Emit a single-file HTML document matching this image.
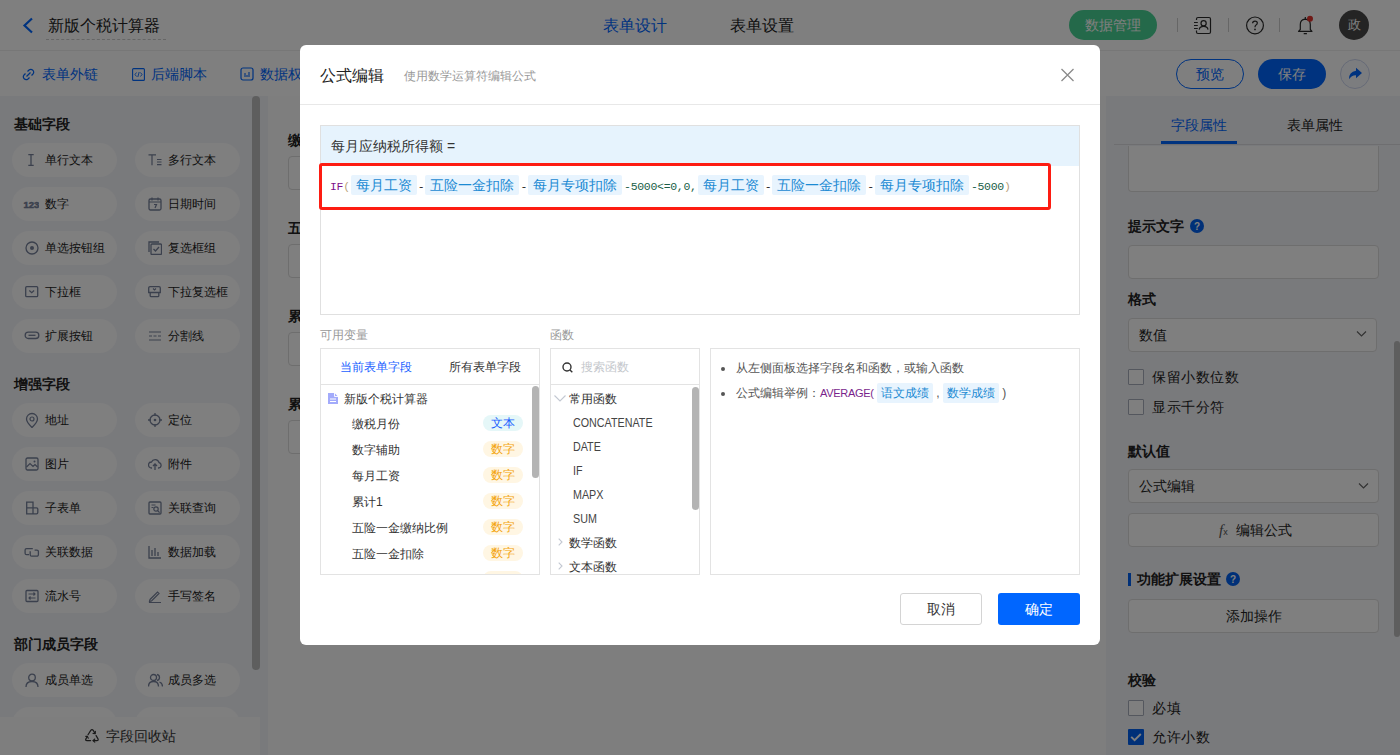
<!DOCTYPE html>
<html><head><meta charset="utf-8">
<style>
*{box-sizing:border-box;margin:0;padding:0}
html,body{width:1400px;height:755px;overflow:hidden;background:#fff;font-family:"Liberation Sans",sans-serif;color:#333}
.abs{position:absolute}
svg{display:block}
/* header */
#hdr{position:absolute;left:0;top:0;width:1400px;height:50px;background:#fff}
#sub{position:absolute;left:0;top:50px;width:1400px;height:46px;background:#fff}
#side{position:absolute;left:0;top:96px;width:268px;height:659px;background:#f3f4f8}
#canvas{position:absolute;left:268px;top:96px;width:838px;height:659px;background:#fdfdfd}
#right{position:absolute;left:1106px;top:96px;width:294px;height:659px;background:#f3f4f8}
.sec{position:absolute;left:14px;font-size:14px;font-weight:bold;color:#222;line-height:14px}
.chip{position:absolute;width:105px;height:34px;border-radius:17px;background:#fefeff;font-size:12px;color:#222;line-height:34px;padding-left:33px}
.chip svg{position:absolute;left:13px;top:10px}
.lbl{position:absolute;font-size:14px;color:#222;line-height:14px}
.inp{position:absolute;background:#fff;border:1px solid #dcdcdc;border-radius:4px}
.mask{position:absolute;left:0;top:0;width:1400px;height:755px;background:rgba(0,0,0,.5)}
#modal{position:absolute;left:300px;top:45px;width:800px;height:600px;background:#fff;border-radius:6px}
.tag{display:inline-block;background:#e8f4fe;color:#1b8ad3;font-size:14px;height:20px;line-height:20px;padding:0 5px;border-radius:2px;vertical-align:middle}
.mono{font-family:"Liberation Mono",monospace;font-size:11.5px;letter-spacing:-0.3px;vertical-align:middle;position:relative;top:2px}
.badge{position:absolute;left:162px;width:40px;height:16px;border-radius:8px;font-size:12px;line-height:16px;text-align:center}
.bt{background:#fff6e3;color:#f3a30a}
.vi{position:absolute;left:31px;font-size:12px;color:#333;line-height:12px}
.fn{position:absolute;left:22px;font-size:12px;color:#444;line-height:12px;transform:scaleX(.895);transform-origin:0 0}
</style></head><body>
<!-- HEADER -->
<div id="hdr">
  <svg class="abs" style="left:22px;top:17px" width="12" height="17" viewBox="0 0 12 17"><path d="M10 1.5 L2.5 8.5 L10 15.5" fill="none" stroke="#0066ff" stroke-width="2.2"/></svg>
  <div class="abs" style="left:48px;top:17px;font-size:16px;line-height:18px;color:#222">新版个税计算器</div>
  <div class="abs" style="left:46px;top:39px;width:120px;border-top:1px dashed #ccc"></div>
  <div class="abs" style="left:603px;top:17px;font-size:16px;line-height:18px;color:#0066ff">表单设计</div>
  <div class="abs" style="left:730px;top:17px;font-size:16px;line-height:18px;color:#222">表单设置</div>
  <div class="abs" style="left:1069px;top:10px;width:88px;height:30px;border-radius:15px;background:#48d294;color:#fff;font-size:14px;line-height:30px;text-align:center">数据管理</div>
  <div class="abs" style="left:1177px;top:18px;width:1px;height:14px;background:#ccc"></div>
  <div class="abs" style="left:1228px;top:18px;width:1px;height:14px;background:#ccc"></div>
  <div class="abs" style="left:1279px;top:18px;width:1px;height:14px;background:#ccc"></div>
  <svg class="abs" style="left:1193px;top:16px" width="19" height="19" viewBox="0 0 19 19"><path d="M3.5 4V3A1.5 1.5 0 0 1 5 1.5H16A1.5 1.5 0 0 1 17.5 3V16A1.5 1.5 0 0 1 16 17.5H5A1.5 1.5 0 0 1 3.5 16V14.5" fill="none" stroke="#2a2a2a" stroke-width="1.2"/><circle cx="10.6" cy="7.3" r="2.6" fill="none" stroke="#2a2a2a" stroke-width="1.2"/><path d="M6.2 13.6 Q6.6 10.4 10.6 10.4 Q14.6 10.4 15 13.6" fill="none" stroke="#2a2a2a" stroke-width="1.2"/><path d="M1 6.5h3.8M1 9.5h3.8M1 12.5h3.8" stroke="#2a2a2a" stroke-width="1.1"/></svg>
  <svg class="abs" style="left:1245px;top:16px" width="20" height="19" viewBox="0 0 20 19"><circle cx="10" cy="9.4" r="8.4" fill="none" stroke="#2a2a2a" stroke-width="1.2"/><path d="M7.6 7.3 Q7.6 5 10 5 Q12.3 5 12.3 7.1 Q12.3 8.5 10.8 9.2 Q10 9.7 10 11.3" fill="none" stroke="#2a2a2a" stroke-width="1.25"/><circle cx="10" cy="13.4" r="0.85" fill="#2a2a2a"/></svg>
  <svg class="abs" style="left:1296px;top:15px" width="20" height="20" viewBox="0 0 20 20"><path d="M2.5 16.3 L4.3 14.5 V9.5 Q4.3 4.6 9.3 4.2 Q14.3 4.6 14.3 9.5 V14.5 L16 16.3 Z" fill="none" stroke="#2a2a2a" stroke-width="1.2" stroke-linejoin="round"/><path d="M9.3 2v2M7.7 18.6h3.2" stroke="#2a2a2a" stroke-width="1.2"/><circle cx="14" cy="3.8" r="3" fill="#e0322c"/></svg>
  <div class="abs" style="left:1339px;top:10px;width:30px;height:30px;border-radius:15px;background:#484848;color:#fff;font-size:13px;line-height:30px;text-align:center">政</div>
</div>
<!-- SUB TOOLBAR -->
<div id="sub">
  <div class="abs" style="left:0;top:0;width:1400px;height:1px;background:#eee"></div>
  <svg class="abs" style="left:22px;top:18px" width="13" height="13" viewBox="0 0 13 13"><path d="M5.5 3.5 L7 2 Q9 0.5 10.8 2.2 Q12.5 4 11 6 L9.5 7.5 M7.5 9.5 L6 11 Q4 12.5 2.2 10.8 Q0.5 9 2 7 L3.5 5.5 M4.5 8.5 L8.5 4.5" fill="none" stroke="#0066ff" stroke-width="1.2"/></svg>
  <div class="abs" style="left:42px;top:16px;font-size:14px;line-height:16px;color:#0066ff">表单外链</div>
  <svg class="abs" style="left:132px;top:18px" width="13" height="13" viewBox="0 0 13 13"><rect x="0.6" y="0.6" width="11.8" height="11.8" rx="1" fill="none" stroke="#0066ff" stroke-width="1.1"/><path d="M4.5 4.5 L3 6.5 L4.5 8.5 M8.5 4.5 L10 6.5 L8.5 8.5 M7.2 4 L5.8 9" fill="none" stroke="#0066ff" stroke-width="0.9"/></svg>
  <div class="abs" style="left:151px;top:16px;font-size:14px;line-height:16px;color:#0066ff">后端脚本</div>
  <svg class="abs" style="left:240px;top:17px" width="14" height="14" viewBox="0 0 14 14"><rect x="1" y="1" width="12" height="12" rx="2" fill="none" stroke="#0066ff" stroke-width="1.2"/><path d="M5 6v4M7 8v2M9 5v5" stroke="#0066ff" stroke-width="1.1"/></svg>
  <div class="abs" style="left:260px;top:16px;font-size:14px;line-height:16px;color:#0066ff">数据权限</div>
  <div class="abs" style="left:1176px;top:9px;width:68px;height:30px;border-radius:15px;border:1px solid #0066ff;color:#0066ff;font-size:14px;line-height:28px;text-align:center">预览</div>
  <div class="abs" style="left:1258px;top:9px;width:68px;height:30px;border-radius:15px;background:#0066ff;color:#fff;font-size:14px;line-height:30px;text-align:center">保存</div>
  <div class="abs" style="left:1340px;top:9px;width:30px;height:30px;border-radius:15px;background:#f9faff;border:1px solid #cdd6ee"></div>
  <svg class="abs" style="left:1347px;top:17px" width="16" height="14" viewBox="0 0 16 14"><path d="M9 0.8 L15 6 L9 11.2 V8.3 Q4.8 8.1 2 12.3 Q1.8 4.8 9 3.8 Z" fill="#0066ff"/></svg>
</div>
<!-- SIDEBAR -->
<div id="side">
  <div class="sec" style="top:21px">基础字段</div>
  <div class="chip" style="left:12px;top:47px">单行文本<svg width="14" height="14" viewBox="0 0 14 14"><path d="M3.3 1.7h5.4M3.3 12.3h5.4M6 1.7v10.6" stroke="#76819a" stroke-width="1.3" fill="none"/></svg></div>
  <div class="chip" style="left:135px;top:47px">多行文本<svg width="14" height="14" viewBox="0 0 14 14"><path d="M0.5 1.8h7.5M4 1.8v10.5M9 6.5h4.5M9 9h4.5M9 11.7h4.5" stroke="#76819a" stroke-width="1.2" fill="none"/></svg></div>
  <div class="chip" style="left:12px;top:91px">数字<svg width="16" height="14" viewBox="0 0 16 14" style="left:11px"><text x="0.5" y="10.5" font-size="9.5" font-weight="bold" fill="#76819a" stroke="#76819a" stroke-width="0.5" font-family="Liberation Sans">123</text></svg></div>
  <div class="chip" style="left:135px;top:91px">日期时间<svg width="14" height="14" viewBox="0 0 14 14"><rect x="1" y="2" width="12" height="11" rx="1.5" fill="none" stroke="#76819a" stroke-width="1.3"/><path d="M1 5h12M4 0.5v3M10 0.5v3M6 7.5h2.5L7 11" stroke="#76819a" stroke-width="1.2" fill="none"/></svg></div>
  <div class="chip" style="left:12px;top:135px">单选按钮组<svg width="14" height="14" viewBox="0 0 14 14"><circle cx="7" cy="7" r="6" fill="none" stroke="#76819a" stroke-width="1.3"/><circle cx="7" cy="7" r="2" fill="#76819a"/></svg></div>
  <div class="chip" style="left:135px;top:135px">复选框组<svg width="14" height="14" viewBox="0 0 14 14"><path d="M1 11V1h10" fill="none" stroke="#76819a" stroke-width="1.3"/><rect x="3" y="3" width="10.5" height="10.5" rx="1" fill="none" stroke="#76819a" stroke-width="1.3"/><path d="M5.5 8l2 2 3.5-4" fill="none" stroke="#76819a" stroke-width="1.3"/></svg></div>
  <div class="chip" style="left:12px;top:179px">下拉框<svg width="14" height="14" viewBox="0 0 14 14" style="top:11px;left:13px"><rect x="0.7" y="0.7" width="12" height="10" rx="1" fill="none" stroke="#76819a" stroke-width="1.3"/><path d="M4.3 4.5l2.4 2.2L9.1 4.5" fill="none" stroke="#76819a" stroke-width="1.2"/></svg></div>
  <div class="chip" style="left:135px;top:179px">下拉复选框<svg width="14" height="14" viewBox="0 0 14 14" style="top:11px;left:13px"><path d="M0.7 6.5V2A1.3 1.3 0 0 1 2 0.7H11A1.3 1.3 0 0 1 12.3 2V6.5Z M2.2 6.5V9.7A1 1 0 0 0 3.2 10.7H9.8A1 1 0 0 0 10.8 9.7V6.5" fill="none" stroke="#76819a" stroke-width="1.3"/><path d="M5 2.5l1.5 1.5 1.5-1.5" fill="none" stroke="#76819a" stroke-width="1.1"/></svg></div>
  <div class="chip" style="left:12px;top:223px">扩展按钮<svg width="16" height="14" viewBox="0 0 16 14" style="left:12px"><rect x="1.2" y="3.2" width="13.6" height="6.3" rx="3.1" fill="none" stroke="#76819a" stroke-width="1.3"/><path d="M4.5 6.3h7" stroke="#76819a" stroke-width="1.3"/></svg></div>
  <div class="chip" style="left:135px;top:223px">分割线<svg width="14" height="14" viewBox="0 0 14 14"><path d="M1 3h12M1 7h3M5.5 7h3M10 7h3M1 11h12" stroke="#76819a" stroke-width="1.2" fill="none"/></svg></div>

  <div class="sec" style="top:281px">增强字段</div>
  <div class="chip" style="left:12px;top:307px">地址<svg width="14" height="14" viewBox="0 0 14 14" style="top:9px;height:16px" ><path d="M7 14.5 Q1.5 9 1.5 6 A5.5 5.5 0 0 1 12.5 6 Q12.5 9 7 14.5Z" fill="none" stroke="#76819a" stroke-width="1.3"/><circle cx="7" cy="6" r="2" fill="none" stroke="#76819a" stroke-width="1.2"/></svg></div>
  <div class="chip" style="left:135px;top:307px">定位<svg width="14" height="14" viewBox="0 0 14 14"><circle cx="7" cy="7" r="5" fill="none" stroke="#76819a" stroke-width="1.3"/><circle cx="7" cy="7" r="1.3" fill="#76819a"/><path d="M7 0v3M7 11v3M0 7h3M11 7h3" stroke="#76819a" stroke-width="1.3"/></svg></div>
  <div class="chip" style="left:12px;top:351px">图片<svg width="14" height="14" viewBox="0 0 14 14"><rect x="1" y="1" width="12" height="12" rx="1.5" fill="none" stroke="#76819a" stroke-width="1.3"/><path d="M1.5 10l3.5-3.5 3 3 2-2 2.5 2.5" fill="none" stroke="#76819a" stroke-width="1.2"/><circle cx="9.5" cy="4.5" r="1" fill="#76819a"/></svg></div>
  <div class="chip" style="left:135px;top:351px">附件<svg width="14" height="14" viewBox="0 0 14 14"><path d="M4 11H3.5A3 3 0 0 1 3.5 5 A4 4 0 0 1 11 5.5 A2.8 2.8 0 0 1 10.5 11H10" fill="none" stroke="#76819a" stroke-width="1.3"/><path d="M7 13V7M5 9l2-2 2 2" fill="none" stroke="#76819a" stroke-width="1.3"/></svg></div>
  <div class="chip" style="left:12px;top:395px">子表单<svg width="14" height="14" viewBox="0 0 14 14"><path d="M1.7 1.2h6.3v11.6H1.7z M1.7 6.8H11.5A1.3 1.3 0 0 1 12.8 8.1V11.5A1.3 1.3 0 0 1 11.5 12.8H8" fill="none" stroke="#76819a" stroke-width="1.3"/></svg></div>
  <div class="chip" style="left:135px;top:395px">关联查询<svg width="14" height="14" viewBox="0 0 14 14"><rect x="1" y="1" width="12" height="12" rx="1" fill="none" stroke="#76819a" stroke-width="1.3"/><path d="M3.5 4h4M3.5 6.5h2" stroke="#76819a" stroke-width="1.2"/><circle cx="8" cy="8" r="2.2" fill="none" stroke="#76819a" stroke-width="1.2"/><path d="M9.6 9.6l2 2" stroke="#76819a" stroke-width="1.3"/></svg></div>
  <div class="chip" style="left:12px;top:439px">关联数据<svg width="16" height="14" viewBox="0 0 16 14" style="left:12px"><path d="M8.8 3.6H2.6A1.5 1.5 0 0 0 1.1 5.1V8.2A1.5 1.5 0 0 0 2.6 9.7H5 M6.2 6.2V9.7A1.5 1.5 0 0 0 7.7 11.2H12.9A1.5 1.5 0 0 0 14.4 9.7V6.6A1.5 1.5 0 0 0 12.9 5.1H10.6" fill="none" stroke="#76819a" stroke-width="1.3"/></svg></div>
  <div class="chip" style="left:135px;top:439px">数据加载<svg width="14" height="14" viewBox="0 0 14 14"><path d="M1 1v12h12M4 11V5M7 11V3M10 11V7" stroke="#76819a" stroke-width="1.3" fill="none"/></svg></div>
  <div class="chip" style="left:12px;top:483px">流水号<svg width="14" height="14" viewBox="0 0 14 14"><rect x="1" y="1.5" width="12" height="11" rx="1" fill="none" stroke="#76819a" stroke-width="1.3"/><path d="M3.5 5h7M3.5 9h7M8.5 3.5l1.5 1.5-1.5 1.5M5.5 7.5L4 9l1.5 1.5" stroke="#76819a" stroke-width="1.1" fill="none"/></svg></div>
  <div class="chip" style="left:135px;top:483px">手写签名<svg width="14" height="14" viewBox="0 0 14 14"><path d="M2 10.5 L9.5 3 L11 4.5 L3.5 12 L1.5 12.5Z M1 13.5h12" fill="none" stroke="#76819a" stroke-width="1.2"/></svg></div>

  <div class="sec" style="top:541px">部门成员字段</div>
  <div class="chip" style="left:12px;top:567px">成员单选<svg width="14" height="14" viewBox="0 0 14 14"><circle cx="7" cy="4.5" r="3.3" fill="none" stroke="#76819a" stroke-width="1.3"/><path d="M1 14 Q1 8.5 7 8.5 Q13 8.5 13 14" fill="none" stroke="#76819a" stroke-width="1.3"/></svg></div>
  <div class="chip" style="left:135px;top:567px">成员多选<svg width="15" height="14" viewBox="0 0 15 14"><circle cx="5.5" cy="4.5" r="3" fill="none" stroke="#76819a" stroke-width="1.3"/><path d="M0.5 13.5 Q0.5 8.5 5.5 8.5 Q10.5 8.5 10.5 13.5M9 1.5 Q11.5 2 11.5 4.5 Q11.5 7 9 7.5 M11.5 9 Q14.5 10 14.5 13.5" fill="none" stroke="#76819a" stroke-width="1.3"/></svg></div>
  <div class="chip" style="left:12px;top:611px"></div>
  <div class="chip" style="left:135px;top:611px"></div>
  <div class="abs" style="left:252px;top:0;width:8px;height:574px;border-radius:4px;background:#bdbdbd"></div>
  <div class="abs" style="left:0;top:621px;width:260px;height:38px;background:#fcfcfd"></div>
  <svg class="abs" style="left:84px;top:632px" width="16" height="15" viewBox="0 0 16 15"><path d="M4 6.8 L6.6 2.6 Q8 0.6 9.4 2.6 L11 5.3 M12.1 7.6 L14 10.9 Q14.8 12.6 12.8 12.6 L9.2 12.6 M6.6 12.6 L3 12.6 Q1 12.6 1.9 10.9 L3.2 8.7" fill="none" stroke="#333" stroke-width="1.2" stroke-linecap="round"/><path d="M11.4 3.4 L11.2 5.7 L9 5.4 M10.8 11 L9 12.6 L10.8 14.2 M1.8 8.4 L3.3 8.3 L4.3 10.2" fill="none" stroke="#333" stroke-width="1.1" stroke-linecap="round" stroke-linejoin="round"/></svg>
  <div class="abs" style="left:106px;top:632px;font-size:14px;line-height:16px;color:#333">字段回收站</div>
</div>
<!-- CANVAS -->
<div id="canvas">
  <div class="lbl" style="left:20px;top:37px;font-weight:bold">缴税月份</div>
  <div class="inp" style="left:20px;top:60px;width:800px;height:34px"></div>
  <div class="lbl" style="left:20px;top:125px;font-weight:bold">五险一金</div>
  <div class="inp" style="left:20px;top:148px;width:800px;height:34px"></div>
  <div class="lbl" style="left:20px;top:213px;font-weight:bold">累计1</div>
  <div class="inp" style="left:20px;top:236px;width:800px;height:34px"></div>
  <div class="lbl" style="left:20px;top:301px;font-weight:bold">累计2</div>
  <div class="inp" style="left:20px;top:324px;width:800px;height:34px"></div>
</div>
<!-- RIGHT PANEL -->
<div id="right">
  <div class="abs" style="left:8px;top:48px;width:286px;height:1px;background:#dcdde0"></div>
  <div class="abs" style="left:65px;top:21px;font-size:14px;line-height:16px;color:#0066ff">字段属性</div>
  <div class="abs" style="left:55px;top:45px;width:76px;height:3px;background:#0066ff"></div>
  <div class="abs" style="left:181px;top:21px;font-size:14px;line-height:16px;color:#222">表单属性</div>
  <div class="inp" style="left:22px;top:50px;width:251px;height:46px;border-top:none;border-radius:0 0 4px 4px"></div>
  <div class="lbl" style="left:22px;top:123px;font-weight:bold">提示文字</div>
  <svg class="abs" style="left:84px;top:123px" width="14" height="14" viewBox="0 0 14 14"><circle cx="7" cy="7" r="7" fill="#0061f0"/><text x="7" y="11" text-anchor="middle" font-size="10" font-weight="bold" fill="#fff" font-family="Liberation Sans">?</text></svg>
  <div class="inp" style="left:22px;top:149px;width:251px;height:34px"></div>
  <div class="lbl" style="left:22px;top:196px;font-weight:bold">格式</div>
  <div class="inp" style="left:22px;top:222px;width:249px;height:34px"></div>
  <div class="lbl" style="left:33px;top:232px">数值</div>
  <svg class="abs" style="left:250px;top:234px" width="11" height="8" viewBox="0 0 11 8"><path d="M1 1.5l4.5 4.5 4.5-4.5" fill="none" stroke="#666" stroke-width="1.2"/></svg>
  <div class="inp" style="left:22px;top:273px;width:16px;height:16px;border-radius:1px;border-color:#a9afbd"></div>
  <div class="lbl" style="left:46px;top:274px;letter-spacing:.6px">保留小数位数</div>
  <div class="inp" style="left:22px;top:303px;width:16px;height:16px;border-radius:1px;border-color:#a9afbd"></div>
  <div class="lbl" style="left:46px;top:304px;letter-spacing:.5px">显示千分符</div>
  <div class="lbl" style="left:22px;top:348px;font-weight:bold">默认值</div>
  <div class="inp" style="left:22px;top:373px;width:251px;height:34px"></div>
  <div class="lbl" style="left:33px;top:383px">公式编辑</div>
  <svg class="abs" style="left:252px;top:386px" width="11" height="8" viewBox="0 0 11 8"><path d="M1 1.5l4.5 4.5 4.5-4.5" fill="none" stroke="#666" stroke-width="1.2"/></svg>
  <div class="inp" style="left:22px;top:417px;width:251px;height:34px"></div>
  <div class="abs" style="left:113px;top:426px;font-family:'Liberation Serif';font-style:italic;font-size:15px;line-height:16px;color:#555">f<span style="font-size:9px;font-style:normal;font-family:'Liberation Sans'">x</span></div>
  <div class="lbl" style="left:130px;top:427px">编辑公式</div>
  <div class="abs" style="left:22px;top:477px;width:3px;height:13px;background:#0061f0"></div>
  <div class="lbl" style="left:31px;top:476px;font-weight:bold">功能扩展设置</div>
  <svg class="abs" style="left:120px;top:476px" width="14" height="14" viewBox="0 0 14 14"><circle cx="7" cy="7" r="7" fill="#0061f0"/><text x="7" y="11" text-anchor="middle" font-size="10" font-weight="bold" fill="#fff" font-family="Liberation Sans">?</text></svg>
  <div class="inp" style="left:22px;top:503px;width:251px;height:34px"></div>
  <div class="lbl" style="left:120px;top:513px">添加操作</div>
  <div class="lbl" style="left:22px;top:577px;font-weight:bold">校验</div>
  <div class="inp" style="left:22px;top:604px;width:16px;height:16px;border-radius:1px;border-color:#a9afbd"></div>
  <div class="lbl" style="left:46px;top:605px;letter-spacing:.6px">必填</div>
  <div class="abs" style="left:22px;top:633px;width:16px;height:16px;border-radius:1px;background:#0061f0"></div>
  <svg class="abs" style="left:24px;top:636px" width="12" height="10" viewBox="0 0 12 10"><path d="M1.2 4.8l3.4 3.4L10.8 2" fill="none" stroke="#fff" stroke-width="1.9"/></svg>
  <div class="lbl" style="left:46px;top:634px;letter-spacing:.6px">允许小数</div>
  <div class="abs" style="left:288px;top:245px;width:6px;height:296px;border-radius:3px;background:#bdbdbd"></div>
</div>
<div class="mask"></div>
<!-- MODAL -->
<div id="modal">
  <div class="abs" style="left:20px;top:22px;font-size:16px;line-height:18px;color:#222">公式编辑</div>
  <div class="abs" style="left:104px;top:24px;font-size:12px;line-height:14px;color:#999">使用数学运算符编辑公式</div>
  <svg class="abs" style="left:760px;top:23px" width="15" height="14" viewBox="0 0 15 14"><path d="M1.5 1 L13.5 13 M13.5 1 L1.5 13" stroke="#8a8a8a" stroke-width="1.3"/></svg>
  <div class="abs" style="left:0;top:59px;width:800px;height:1px;background:#e8e8e8"></div>
  <div class="abs" style="left:20px;top:80px;width:760px;height:190px;border:1px solid #e0e0e0;background:#fff">
    <div class="abs" style="left:0;top:0;width:758px;height:40px;background:#e6f3fd"></div>
    <div class="abs" style="left:10px;top:12px;font-size:14px;line-height:16px;color:#333">每月应纳税所得额 =</div>
    <div class="abs" id="fl" style="left:9px;top:49px;height:20px;white-space:nowrap;line-height:20px;font-size:0">
      <span class="mono" style="color:#7d0f8a">IF</span><span class="mono" style="color:#b9a27c;padding-right:1px">(</span><span class="tag">每月工资</span><span class="mono" style="color:#222;padding:0 1px">-</span><span class="tag">五险一金扣除</span><span class="mono" style="color:#222;padding:0 1px">-</span><span class="tag">每月专项扣除</span><span class="mono" style="color:#1a5e48;padding:0 1px 0 2px">-5000&lt;=0,0,</span><span class="tag">每月工资</span><span class="mono" style="color:#222;padding:0 1px">-</span><span class="tag">五险一金扣除</span><span class="mono" style="color:#222;padding:0 1px">-</span><span class="tag">每月专项扣除</span><span class="mono" style="color:#1a5e48;padding-left:2px">-5000</span><span class="mono" style="color:#b9a27c">)</span>
    </div>
  </div>
  <div class="abs" style="left:19px;top:118px;width:732px;height:47px;border:3px solid #fd1c12;border-radius:3px"></div>
  <div class="abs" style="left:20px;top:283px;font-size:12px;line-height:14px;color:#999">可用变量</div>
  <div class="abs" style="left:250px;top:283px;font-size:12px;line-height:14px;color:#999">函数</div>
  <!-- variables -->
  <div class="abs" style="left:20px;top:303px;width:220px;height:227px;border:1px solid #e3e3e3;overflow:hidden">
    <div class="abs" style="left:19px;top:11px;font-size:12px;line-height:14px;color:#1b5fff">当前表单字段</div>
    <div class="abs" style="left:128px;top:11px;font-size:12px;line-height:14px;color:#333">所有表单字段</div>
    <div class="abs" style="left:0;top:35px;width:220px;height:1px;background:#e3e3e3"></div>
    <svg class="abs" style="left:7px;top:44px" width="10" height="11" viewBox="0 0 10 11"><path d="M0 0h6.5l3.5 3.5v7.5H0z" fill="#a3abfb"/><path d="M6.5 0v3.5h3.5" fill="none" stroke="#fff" stroke-width="0.9"/><path d="M2 6h6M2 8.5h6" stroke="#fff" stroke-width="1"/></svg>
    <div class="abs" style="left:23px;top:43px;font-size:12px;line-height:14px;color:#333">新版个税计算器</div>
    <div class="vi" style="top:69px">缴税月份</div><div class="badge" style="top:66px;background:#e5f7f8;color:#1b5fff">文本</div>
    <div class="vi" style="top:95px">数字辅助</div><div class="badge bt" style="top:92px">数字</div>
    <div class="vi" style="top:121px">每月工资</div><div class="badge bt" style="top:118px">数字</div>
    <div class="vi" style="top:147px">累计1</div><div class="badge bt" style="top:144px">数字</div>
    <div class="vi" style="top:173px">五险一金缴纳比例</div><div class="badge bt" style="top:170px">数字</div>
    <div class="vi" style="top:199px">五险一金扣除</div><div class="badge bt" style="top:196px">数字</div>
    <div class="badge bt" style="top:222px"></div>
    <div class="abs" style="left:211px;top:37px;width:7px;height:92px;border-radius:4px;background:#b4b4b4"></div>
  </div>
  <!-- functions -->
  <div class="abs" style="left:250px;top:303px;width:150px;height:227px;border:1px solid #e3e3e3;overflow:hidden">
    <svg class="abs" style="left:11px;top:13px" width="11" height="11" viewBox="0 0 11 11"><circle cx="5" cy="5" r="4" fill="none" stroke="#333" stroke-width="1.4"/><path d="M8 8l2.3 2.3" stroke="#333" stroke-width="1.4"/></svg>
    <div class="abs" style="left:30px;top:11px;font-size:12px;line-height:14px;color:#c4c7cc">搜索函数</div>
    <div class="abs" style="left:0;top:35px;width:150px;height:1px;background:#e3e3e3"></div>
    <svg class="abs" style="left:3px;top:46px" width="12" height="7" viewBox="0 0 12 7"><path d="M0.5 0.5l5.5 5.5 5.5-5.5" fill="none" stroke="#c3c8d2" stroke-width="1.1"/></svg>
    <div class="abs" style="left:18px;top:43px;font-size:12px;line-height:14px;color:#333">常用函数</div>
    <div class="fn" style="top:68px">CONCATENATE</div>
    <div class="fn" style="top:92px">DATE</div>
    <div class="fn" style="top:116px">IF</div>
    <div class="fn" style="top:140px">MAPX</div>
    <div class="fn" style="top:164px">SUM</div>
    <svg class="abs" style="left:7px;top:189px" width="5" height="8" viewBox="0 0 5 8"><path d="M0.7 0.7l3.3 3.3-3.3 3.3" fill="none" stroke="#c3c8d2" stroke-width="1.1"/></svg>
    <div class="abs" style="left:18px;top:187px;font-size:12px;line-height:14px;color:#333">数学函数</div>
    <svg class="abs" style="left:7px;top:213px" width="5" height="8" viewBox="0 0 5 8"><path d="M0.7 0.7l3.3 3.3-3.3 3.3" fill="none" stroke="#c3c8d2" stroke-width="1.1"/></svg>
    <div class="abs" style="left:18px;top:211px;font-size:12px;line-height:14px;color:#333">文本函数</div>
    <div class="abs" style="left:141px;top:38px;width:7px;height:123px;border-radius:4px;background:#b4b4b4"></div>
  </div>
  <!-- description -->
  <div class="abs" style="left:410px;top:303px;width:370px;height:227px;border:1px solid #e3e3e3">
    <div class="abs" style="left:10px;top:18px;width:4px;height:4px;border-radius:2px;background:#555"></div>
    <div class="abs" style="left:25px;top:12px;font-size:12px;line-height:14px;color:#555">从左侧面板选择字段名和函数，或输入函数</div>
    <div class="abs" style="left:10px;top:43px;width:4px;height:4px;border-radius:2px;background:#555"></div>
    <div class="abs" style="left:25px;top:34px;height:20px;line-height:20px;white-space:nowrap;font-size:12px;color:#555">公式编辑举例：<span style="color:#7a1f8c;font-size:11px;letter-spacing:-0.3px">AVERAGE(</span> <span class="tag" style="font-size:12px;padding:0 4px;vertical-align:top">语文成绩</span> , <span class="tag" style="font-size:12px;padding:0 4px;vertical-align:top">数学成绩</span> )</div>
  </div>
  <div class="abs" style="left:600px;top:548px;width:82px;height:32px;border:1px solid #d4d4d4;border-radius:3px;font-size:14px;line-height:30px;text-align:center;color:#333">取消</div>
  <div class="abs" style="left:698px;top:548px;width:82px;height:32px;background:#0066ff;border-radius:3px;font-size:14px;line-height:32px;text-align:center;color:#fff">确定</div>
</div>
</body></html>
